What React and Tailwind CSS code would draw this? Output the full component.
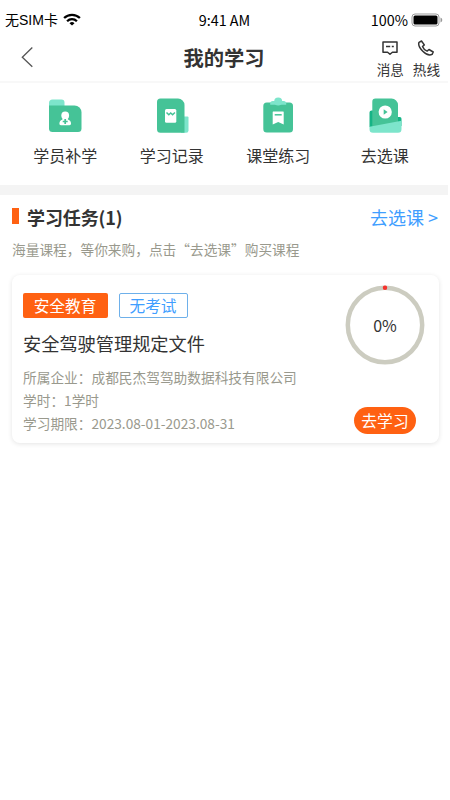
function FolderIcon() {
  return (
    <svg width="36" height="36" viewBox="0 0 36 36">
      <path d="M2 12V5a3.500 3.500 0 0 1 3.500-3.500H14.500A3 3 0 0 1 17.500 4.500V9z" fill="#7de5cb" />
      <path d="M2 7.500H27.500A7 7 0 0 1 34.500 14.500V30.500A3.500 3.500 0 0 1 31 34H5.500A3.500 3.500 0 0 1 2 30.500z" fill="#45c397" />
      <circle cx="18.200" cy="17.500" r="3.900" fill="#fff" />
      <path d="M16.200 19h4l.8 2.500c2 .8 3 2 3 4 0 1.200-.6 1.700-1.500 1.700h-8.600c-1 0-1.500-.5-1.500-1.700 0-2 1-3.200 3-4z" fill="#fff" />
      <path d="M18.200 21v5M15.700 23.500h5" stroke="#45c397" strokeWidth="1.700" />
    </svg>
  );
}

function RecordIcon() {
  return (
    <svg width="36" height="36" viewBox="0 0 36 36">
      <path d="M27 18.500h6.500a1 1 0 0 1 1 1V32.500a2.300 2.300 0 0 1-2.300 2.300H27z" fill="#7de5cb" />
      <path d="M6.500 .5H24A6.500 6.500 0 0 1 30.500 7V34.800H6.500a3.500 3.500 0 0 1-3.500-3.500V4A3.500 3.500 0 0 1 6.500 .5z" fill="#45c397" />
      <rect x="11" y="11" width="11.300" height="13.700" rx="1.500" fill="#fff" />
      <path d="M12.500 14.500l2.300 2.200 1.900-1.700 1.900 1.700 2.300-2.200" fill="none" stroke="#45c397" strokeWidth="1.500" />
    </svg>
  );
}

function PracticeIcon() {
  return (
    <svg className="overflow-visible" width="36" height="36" viewBox="0 0 36 36">
      <rect x="3.300" y="4.500" width="29.700" height="30" rx="3.500" fill="#45c397" />
      <circle cx="18.200" cy="3.500" r="4" fill="#7de5cb" />
      <path d="M10.200 6.700V5.500a2.500 2.500 0 0 1 2.500-2.500h11a2.500 2.500 0 0 1 2.500 2.500v1.200z" fill="#7de5cb" />
      <path d="M13.200 13.500h10a.5.500 0 0 1 .5.500v12.600L18.200 24l-5.500 2.600V14a.5.500 0 0 1 .5-.5z" fill="#fff" />
      <path d="M14.700 16.800h7" stroke="#45c397" strokeWidth="1.500" />
    </svg>
  );
}

function CourseIcon() {
  return (
    <svg width="36" height="36" viewBox="0 0 36 36">
      <path d="M2.500 14.500a2 2 0 0 1 2-2H8V29H2.500zM28 19h4.800a1.700 1.700 0 0 1 1.700 1.700V28H28z" fill="#16b486" />
      <path d="M8.500 .5H24.500A6.500 6.500 0 0 1 31 7V32H5.300V3.700A3.200 3.200 0 0 1 8.500 .5z" fill="#45c397" />
      <path d="M2.500 28.700L34.500 22.700V31.300A3.500 3.500 0 0 1 31 34.800H6A3.500 3.500 0 0 1 2.500 31.300z" fill="#7de5cb" />
      <circle cx="18.200" cy="14" r="6.600" fill="#fff" />
      <path d="M16.700 11.200v5.600l3.900-2.800z" fill="#45c397" />
    </svg>
  );
}

const menus = [
  { name: "学员补学", Icon: FolderIcon },
  { name: "学习记录", Icon: RecordIcon },
  { name: "课堂练习", Icon: PracticeIcon },
  { name: "去选课", Icon: CourseIcon },
];

const infos = [
  "所属企业：成都民杰驾驾助数据科技有限公司",
  "学时：1学时",
  "学习期限：2023.08-01-2023.08-31",
];

function StatusBar() {
  return (
    <div className="flex h-10 items-center pr-[7px] pb-px pl-[5px] text-[14.500px] leading-none text-black">
      <div className="flex flex-1 items-center gap-[5px]">
        <span className="font-['Liberation_Sans','Noto_Sans_CJK_SC',sans-serif] text-[14px] whitespace-nowrap">无SIM卡</span>
        <svg width="18" height="13" viewBox="0 0 18 13" fill="none" stroke="#000" strokeWidth="2.300">
          <path d="M1.100 5a11.300 11.300 0 0 1 15.800 0" />
          <path d="M4.100 8.200a7 7 0 0 1 9.800 0" />
          <path d="M9 12.600L6.500 10.200a3.600 3.600 0 0 1 5 0z" fill="#000" stroke="none" />
        </svg>
      </div>
      <span className="ml-[3px] pt-px text-[14.400px]">9:41 AM</span>
      <div className="flex flex-1 items-center justify-end gap-[3px]">
        <span className="pt-px text-[14.400px]">100%</span>
        <svg className="-mr-[2px]" width="32" height="14" viewBox="0 0 32 14">
          <rect x="1" y="1" width="27" height="12" rx="3" fill="#fff" stroke="#999" />
          <rect x="2.500" y="2.500" width="24" height="9" rx="1.500" fill="#000" />
          <path d="M29.500 4.500q1.800.6 1.800 2.500t-1.800 2.500z" fill="#999" />
        </svg>
      </div>
    </div>
  );
}

function Header() {
  return (
    <div className="grid h-[43px] grid-cols-[1fr_auto_1fr] border-b-2 border-[#f8f8f8]">
      <svg className="mt-[6px] ml-5" width="14" height="22" viewBox="0 0 14 22" fill="none" stroke="#555" strokeWidth="1.300">
        <path d="M12.300 1.500L2.300 11.200l10 9.600" />
      </svg>
      <h1 className="mt-[7px] text-[20.300px] leading-5 font-bold text-[#333]">我的学习</h1>
      <div className="flex justify-end gap-[9px] pr-2 text-[13.600px] leading-none text-[#333]">
        <div className="flex flex-col items-center gap-[7px]">
          <svg width="18" height="16" viewBox="0 0 18 16" fill="none" stroke="#333" strokeWidth="1.500">
            <path d="M2 1.900h14v10.300h-4.600L9 14.300 6.600 12.200H2z" strokeLinejoin="round" />
            <path d="M5 6.500h4.200M10.800 6.500h2" />
          </svg>
          <span>消息</span>
        </div>
        <div className="flex flex-col items-center gap-[7px]">
          <svg width="18" height="16" viewBox="0 0 18 16" fill="none" stroke="#333" strokeWidth="1.500" strokeLinejoin="round">
            <path d="M2 2.300L4.500 1 7.300 4.900 5.500 6.500c.7 1.900 2.500 3.700 4.600 4.600l1.900-1.600 4.200 2.500-1.100 2.400c-3 1.300-6.700-.6-9.300-3.200C2.700 8.100 1 5 2 2.300z" />
          </svg>
          <span>热线</span>
        </div>
      </div>
    </div>
  );
}

function Progress({ value }) {
  const len = 2 * Math.PI * 37.2;
  return (
    <div className="grid size-20 place-items-center">
      <svg className="col-start-1 row-start-1" width="80" height="80" viewBox="0 0 80 80" fill="none">
        <circle cx="40" cy="40" r="37.200" stroke="#ccccc0" strokeWidth="4.500" />
        <path
          d="M40 2.800a37.200 37.200 0 1 1-.01 0"
          stroke="#f5322d"
          strokeWidth="4.500"
          strokeLinecap="round"
          strokeDasharray={`${(len * value) / 100 + 0.01} ${len}`}
        />
      </svg>
      <span className="col-start-1 row-start-1 -mt-px text-base leading-none text-[#333]">{value}%</span>
    </div>
  );
}

function TaskCard() {
  return (
    <div className="mt-[15px] flex h-[168px] justify-between rounded-lg bg-white pr-[14px] pl-[11px] shadow-[0_1px_5px_rgba(0,0,0,0.11)]">
      <div className="pt-[18px]">
        <div className="flex gap-[11px] text-[15.700px] leading-none">
          <span className="flex h-[25px] w-[85px] items-center justify-center rounded-[2px] bg-[#ff6112] pr-px text-white">安全教育</span>
          <span className="flex h-[25px] w-[69px] items-center justify-center rounded-[2px] border border-[#6eb0ea] pr-px text-[#409eff]">无考试</span>
        </div>
        <h3 className="mt-[13px] text-[18.200px] leading-6 text-[#333]">安全驾驶管理规定文件</h3>
        <div className="mt-[11px] text-[13.700px] leading-[23px] whitespace-nowrap text-[#99998d]">
          {infos.map((info) => (
            <p key={info}>{info}</p>
          ))}
        </div>
      </div>
      <div className="flex flex-col items-center pt-[10px]">
        <Progress value={0} />
        <button className="mt-[42px] h-[27px] w-[62px] rounded-full bg-[#ff6112] text-[15.800px] leading-none text-white">去学习</button>
      </div>
    </div>
  );
}

export default function App() {
  return (
    <div className="h-[800px] w-[448px] bg-white font-['Noto_Sans_CJK_SC',sans-serif]">
      <StatusBar />
      <Header />
      <div className="grid h-[102px] grid-cols-4 pt-[15px] pr-[10px] pl-3">
        {menus.map(({ name, Icon }) => (
          <div key={name} className="flex flex-col items-center gap-[13px]">
            <Icon />
            <span className="text-base leading-4 text-[#333]">{name}</span>
          </div>
        ))}
      </div>
      <div className="h-[10px] bg-[#f4f4f4]" />
      <div className="pr-[9px] pl-3">
        <div className="flex h-[45px] items-center leading-none">
          <i className="mt-[-3px] h-4 w-[7px] bg-[#ff6112]" />
          <h2 className="ml-2 flex-1 pb-px text-lg leading-none font-bold tracking-[-0.100px] text-[#333]">学习任务(1)</h2>
          <a className="mr-px pb-px text-lg leading-none text-[#409eff]">去选课 &gt;</a>
        </div>
        <p className="text-[13.700px] leading-[18px] whitespace-nowrap text-[#99998d]">海量课程，等你来购，点击“去选课”购买课程</p>
        <div className="pt-[2px]">
          <TaskCard />
        </div>
      </div>
    </div>
  );
}
